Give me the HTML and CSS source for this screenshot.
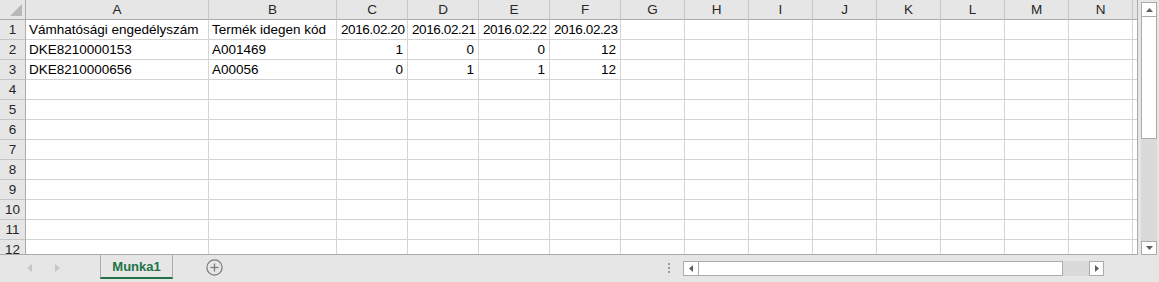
FILE: index.html
```html
<!DOCTYPE html>
<html lang="hu">
<head>
    <meta charset="UTF-8">
    <title>Munka1 - Excel</title>
    <link rel="stylesheet" href="styles.css">
</head>
<body>
    <div class="workbook">
        <div class="top-area">
            <div class="sheet">
                <!-- column headers -->
                <div class="corner">
                    <svg width="12" height="12" viewBox="0 0 12 12"><polygon points="12,0 12,12 0,12" fill="#b7b7b7"/></svg>
                </div>
                <div class="colhead">A</div><div class="colhead">B</div><div class="colhead">C</div><div class="colhead">D</div><div class="colhead">E</div><div class="colhead">F</div><div class="colhead">G</div><div class="colhead">H</div><div class="colhead">I</div><div class="colhead">J</div><div class="colhead">K</div><div class="colhead">L</div><div class="colhead">M</div><div class="colhead">N</div><div class="colhead"></div>

                <div class="rowhead">1</div>
                <div class="cell">Vámhatósági engedélyszám</div><div class="cell">Termék idegen kód</div><div class="cell date">2016.02.20</div><div class="cell date">2016.02.21</div><div class="cell date">2016.02.22</div><div class="cell date">2016.02.23</div>
                <div class="cell"></div><div class="cell"></div><div class="cell"></div><div class="cell"></div><div class="cell"></div><div class="cell"></div><div class="cell"></div><div class="cell"></div><div class="cell"></div>

                <div class="rowhead">2</div>
                <div class="cell">DKE8210000153</div><div class="cell">A001469</div><div class="cell num">1</div><div class="cell num">0</div><div class="cell num">0</div><div class="cell num">12</div>
                <div class="cell"></div><div class="cell"></div><div class="cell"></div><div class="cell"></div><div class="cell"></div><div class="cell"></div><div class="cell"></div><div class="cell"></div><div class="cell"></div>

                <div class="rowhead">3</div>
                <div class="cell">DKE8210000656</div><div class="cell">A00056</div><div class="cell num">0</div><div class="cell num">1</div><div class="cell num">1</div><div class="cell num">12</div>
                <div class="cell"></div><div class="cell"></div><div class="cell"></div><div class="cell"></div><div class="cell"></div><div class="cell"></div><div class="cell"></div><div class="cell"></div><div class="cell"></div>

                <div class="rowhead">4</div>
                <div class="cell"></div><div class="cell"></div><div class="cell"></div><div class="cell"></div><div class="cell"></div><div class="cell"></div><div class="cell"></div><div class="cell"></div><div class="cell"></div><div class="cell"></div><div class="cell"></div><div class="cell"></div><div class="cell"></div><div class="cell"></div><div class="cell"></div>

                <div class="rowhead">5</div>
                <div class="cell"></div><div class="cell"></div><div class="cell"></div><div class="cell"></div><div class="cell"></div><div class="cell"></div><div class="cell"></div><div class="cell"></div><div class="cell"></div><div class="cell"></div><div class="cell"></div><div class="cell"></div><div class="cell"></div><div class="cell"></div><div class="cell"></div>

                <div class="rowhead">6</div>
                <div class="cell"></div><div class="cell"></div><div class="cell"></div><div class="cell"></div><div class="cell"></div><div class="cell"></div><div class="cell"></div><div class="cell"></div><div class="cell"></div><div class="cell"></div><div class="cell"></div><div class="cell"></div><div class="cell"></div><div class="cell"></div><div class="cell"></div>

                <div class="rowhead">7</div>
                <div class="cell"></div><div class="cell"></div><div class="cell"></div><div class="cell"></div><div class="cell"></div><div class="cell"></div><div class="cell"></div><div class="cell"></div><div class="cell"></div><div class="cell"></div><div class="cell"></div><div class="cell"></div><div class="cell"></div><div class="cell"></div><div class="cell"></div>

                <div class="rowhead">8</div>
                <div class="cell"></div><div class="cell"></div><div class="cell"></div><div class="cell"></div><div class="cell"></div><div class="cell"></div><div class="cell"></div><div class="cell"></div><div class="cell"></div><div class="cell"></div><div class="cell"></div><div class="cell"></div><div class="cell"></div><div class="cell"></div><div class="cell"></div>

                <div class="rowhead">9</div>
                <div class="cell"></div><div class="cell"></div><div class="cell"></div><div class="cell"></div><div class="cell"></div><div class="cell"></div><div class="cell"></div><div class="cell"></div><div class="cell"></div><div class="cell"></div><div class="cell"></div><div class="cell"></div><div class="cell"></div><div class="cell"></div><div class="cell"></div>

                <div class="rowhead">10</div>
                <div class="cell"></div><div class="cell"></div><div class="cell"></div><div class="cell"></div><div class="cell"></div><div class="cell"></div><div class="cell"></div><div class="cell"></div><div class="cell"></div><div class="cell"></div><div class="cell"></div><div class="cell"></div><div class="cell"></div><div class="cell"></div><div class="cell"></div>

                <div class="rowhead">11</div>
                <div class="cell"></div><div class="cell"></div><div class="cell"></div><div class="cell"></div><div class="cell"></div><div class="cell"></div><div class="cell"></div><div class="cell"></div><div class="cell"></div><div class="cell"></div><div class="cell"></div><div class="cell"></div><div class="cell"></div><div class="cell"></div><div class="cell"></div>

                <div class="rowhead">12</div>
                <div class="cell"></div><div class="cell"></div><div class="cell"></div><div class="cell"></div><div class="cell"></div><div class="cell"></div><div class="cell"></div><div class="cell"></div><div class="cell"></div><div class="cell"></div><div class="cell"></div><div class="cell"></div><div class="cell"></div><div class="cell"></div><div class="cell"></div>
            </div>

            <div class="vscroll-area">
                <div class="vscroll">
                    <div class="sb-btn sb-up">
                        <svg width="7" height="4" viewBox="0 0 7 4"><polygon points="3.5,0 7,4 0,4" fill="#606060"/></svg>
                    </div>
                    <div class="sb-thumb-v"></div>
                    <div class="sb-track"></div>
                    <div class="sb-btn sb-down">
                        <svg width="7" height="4" viewBox="0 0 7 4"><polygon points="0,0 7,0 3.5,4" fill="#606060"/></svg>
                    </div>
                </div>
            </div>
        </div>

        <div class="tabbar">
            <div class="tab-nav">
                <svg width="5" height="8" viewBox="0 0 5 8"><polygon points="5,0 5,8 0,4" fill="#c6c6c6"/></svg>
                <svg width="5" height="8" viewBox="0 0 5 8"><polygon points="0,0 5,4 0,8" fill="#c6c6c6"/></svg>
            </div>
            <div class="sheet-tab">Munka1</div>
            <div class="add-sheet">
                <svg width="17" height="17" viewBox="0 0 17 17">
                    <circle cx="8.5" cy="8.5" r="7.6" fill="none" stroke="#7a7a7a" stroke-width="1.2"/>
                    <line x1="8.5" y1="4.5" x2="8.5" y2="12.5" stroke="#7a7a7a" stroke-width="1.3"/>
                    <line x1="4.5" y1="8.5" x2="12.5" y2="8.5" stroke="#7a7a7a" stroke-width="1.3"/>
                </svg>
            </div>
            <div class="spacer"></div>
            <div class="split-dots">
                <span></span><span></span><span></span>
            </div>
            <div class="hscroll">
                <div class="sb-btn sb-left">
                    <svg width="4" height="7" viewBox="0 0 4 7"><polygon points="4,0 4,7 0,3.5" fill="#606060"/></svg>
                </div>
                <div class="sb-thumb-h"></div>
                <div class="sb-track"></div>
                <div class="sb-btn sb-right">
                    <svg width="4" height="7" viewBox="0 0 4 7"><polygon points="0,0 4,3.5 0,7" fill="#606060"/></svg>
                </div>
            </div>
        </div>
    </div>
</body>
</html>
```

FILE: styles.css
```css
* {
    margin: 0;
    padding: 0;
    box-sizing: border-box;
}

body {
    font-family: 'Liberation Sans', Arial, sans-serif;
    font-size: 13.5px;
    color: #000;
    background: #e6e6e6;
    width: 1159px;
    height: 282px;
    overflow: hidden;
}

.workbook {
    display: flex;
    flex-direction: column;
    height: 282px;
}

.top-area {
    display: flex;
    height: 255px;
}

/* grid */

.sheet {
    width: 1138px;
    height: 255px;
    overflow: hidden;
    background: #fff;
    border-right: 1px solid #ababab;
    border-bottom: 1px solid #ababab;
    display: grid;
    grid-template-columns: 26px 183px 128px 71px 71px 71px 71px repeat(8, 64px) 64px;
    grid-auto-rows: 20px;
}

.corner {
    background: #e6e6e6;
    border-right: 1px solid #ababab;
    border-bottom: 1px solid #ababab;
    display: flex;
    align-items: flex-end;
    justify-content: flex-end;
    padding: 0 3px 3px 0;
}

.colhead {
    background: #e6e6e6;
    border-right: 1px solid #c6c6c6;
    border-bottom: 1px solid #ababab;
    text-align: center;
    line-height: 19px;
    color: #262626;
}

.rowhead {
    background: #e6e6e6;
    border-right: 1px solid #ababab;
    border-bottom: 1px solid #c6c6c6;
    text-align: center;
    line-height: 20px;
    color: #262626;
}

.cell {
    border-right: 1px solid #d4d4d4;
    border-bottom: 1px solid #d4d4d4;
    padding: 0 3px;
    line-height: 20px;
    white-space: nowrap;
    overflow: hidden;
}

.cell.num {
    text-align: right;
    padding-right: 4px;
}

.cell.date {
    letter-spacing: -0.4px;
    padding-left: 4px;
}

/* vertical scrollbar */

.vscroll-area {
    width: 21px;
    padding: 2px 0 0 3px;
}

.vscroll {
    width: 16px;
    height: 253px;
    display: flex;
    flex-direction: column;
    background: #dadada;
}

.sb-btn {
    background: #fff;
    border: 1px solid #ababab;
    display: flex;
    align-items: center;
    justify-content: center;
}

.sb-up {
    height: 15px;
}

.sb-down {
    height: 14px;
}

.sb-thumb-v {
    height: 122px;
    background: #fff;
    border: 1px solid #ababab;
    border-top: none;
}

.sb-track {
    flex: 1;
    background: #dadada;
}

/* sheet tabs */

.tabbar {
    display: flex;
    height: 27px;
    background: #e6e6e6;
}

.tab-nav {
    width: 100px;
    display: flex;
    align-items: center;
    gap: 23px;
    padding: 0 0 1px 27px;
}

.sheet-tab {
    width: 73px;
    height: 24px;
    background: #e6e6e6;
    border-left: 1px solid #ababab;
    border-right: 1px solid #ababab;
    border-bottom: 2px solid #217346;
    color: #217346;
    font-weight: bold;
    font-size: 13px;
    text-align: center;
    line-height: 23px;
}

.add-sheet {
    margin-left: 33px;
    display: flex;
    align-items: center;
    padding-bottom: 2px;
}

.spacer {
    flex: 1;
}

.split-dots {
    display: flex;
    flex-direction: column;
    justify-content: center;
    gap: 2px;
    margin-right: 13px;
    padding-bottom: 1px;
}

.split-dots span {
    width: 2px;
    height: 2px;
    background: #9a9a9a;
}

.hscroll {
    width: 421px;
    height: 15px;
    margin: 6px 55px 0 0;
    display: flex;
    background: #dadada;
}

.sb-left {
    width: 16px;
}

.sb-right {
    width: 15px;
}

.sb-thumb-h {
    width: 364px;
    background: #fff;
    border: 1px solid #ababab;
    border-left: none;
}
```
